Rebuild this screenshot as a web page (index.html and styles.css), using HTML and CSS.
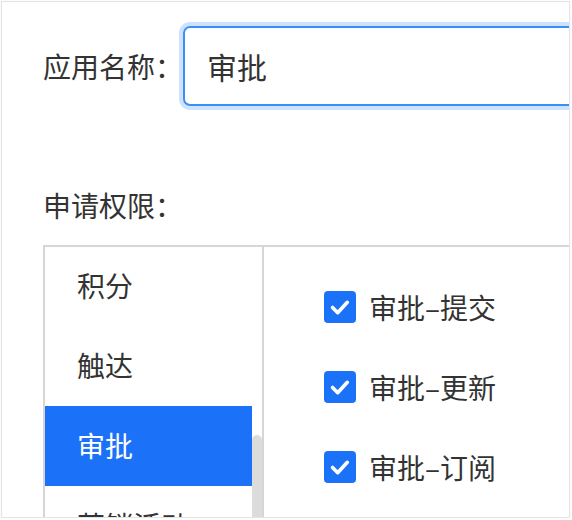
FILE: index.html
```html
<!DOCTYPE html>
<html lang="zh">
<head>
<meta charset="utf-8">
<link rel="stylesheet" href="styles.css">
</head>
<body>
<div class="frame">
  <div class="name-row">
    <span class="label">应用名称：</span>
    <div class="input">审批</div>
  </div>
  <div class="section-label">申请权限：</div>
  <div class="picker">
    <div class="cats">
      <ul class="cat-list">
        <li class="cat">积分</li>
        <li class="cat">触达</li>
        <li class="cat active">审批</li>
        <li class="cat">营销活动</li>
      </ul>
      <div class="track"><div class="thumb"></div></div>
    </div>
    <div class="perms">
      <label class="perm"><span class="box"><svg viewBox="0 0 32 32" width="32" height="32"><path d="M8.5 16.5l5.2 5.2 9.6-10.4" fill="none" stroke="#fff" stroke-width="3.6" stroke-linecap="round" stroke-linejoin="round"/></svg></span><span class="perm-text">审批–提交</span></label>
      <label class="perm"><span class="box"><svg viewBox="0 0 32 32" width="32" height="32"><path d="M8.5 16.5l5.2 5.2 9.6-10.4" fill="none" stroke="#fff" stroke-width="3.6" stroke-linecap="round" stroke-linejoin="round"/></svg></span><span class="perm-text">审批–更新</span></label>
      <label class="perm"><span class="box"><svg viewBox="0 0 32 32" width="32" height="32"><path d="M8.5 16.5l5.2 5.2 9.6-10.4" fill="none" stroke="#fff" stroke-width="3.6" stroke-linecap="round" stroke-linejoin="round"/></svg></span><span class="perm-text">审批–订阅</span></label>
    </div>
  </div>
</div>
</body>
</html>
```

FILE: styles.css
```css
* { box-sizing: border-box; }
html, body { margin: 0; padding: 0; background: #fff; }
body {
  font-family: "Noto Sans CJK SC", "Noto Sans", sans-serif;
  color: #333;
}
.frame {
  margin: 1px 0 0 1px;
  width: 569px;
  height: 517px;
  border: 1px solid #e4e4e4;
  box-shadow: 0 0 2px rgba(0,0,0,0.06);
  overflow: hidden;
  padding: 24px 0 0 41px;
}
.name-row {
  display: flex;
  align-items: center;
  height: 80px;
}
.label {
  font-size: 28px;
  line-height: 40px;
  flex: none;
}
.input {
  flex: none;
  width: 420px;
  height: 80px;
  border: 2px solid #3a8ef8;
  border-radius: 7px;
  box-shadow: 0 0 0 4px #cfe2fd;
  font-size: 30px;
  line-height: 76px;
  padding-left: 22px;
  color: #333;
}
.section-label {
  margin-top: 79px;
  font-size: 28px;
  line-height: 40px;
}
.picker {
  margin-top: 20px;
  display: flex;
  border-top: 2px solid #d6d6d6;
  border-left: 2px solid #d6d6d6;
  height: 400px;
}
.cats {
  flex: none;
  width: 219px;
  display: flex;
  border-right: 2px solid #d6d6d6;
}
.cat-list {
  list-style: none;
  margin: -1px 0 0;
  padding: 0;
  width: 207px;
}
.cat {
  height: 80px;
  line-height: 78px;
  padding-left: 32px;
  font-size: 28px;
  color: #333;
}
.cat.active {
  background: #1b72f8;
  color: #fff;
}
.track {
  width: 10px;
}
.thumb {
  margin-top: 188px;
  height: 120px;
  background: #dcdcdc;
  border-radius: 5px;
}
.perms {
  flex: 1;
  padding: 20px 0 0 60px;
}
.perm {
  display: flex;
  align-items: center;
  height: 80px;
}
.box {
  flex: none;
  width: 32px;
  height: 32px;
  border-radius: 4px;
  background: #1b72f8;
  display: flex;
}
.perm-text {
  margin-left: 13px;
  font-size: 28px;
  line-height: 40px;
  color: #333;
}
```
